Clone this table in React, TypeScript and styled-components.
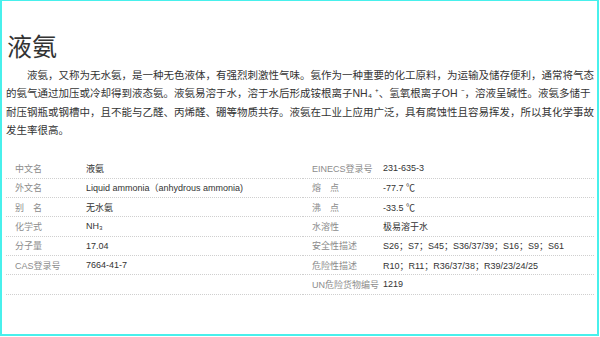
import React from "react";
import styled, { createGlobalStyle } from "styled-components";

const GlobalStyle = createGlobalStyle`
  html, body { margin: 0; padding: 0; background: #fff; }
  body { font-family: "Liberation Sans", "Noto Sans CJK SC", sans-serif; }
`;

const Frame = styled.div`
  box-sizing: border-box;
  width: 599px;
  height: 336px;
  border-style: solid;
  border-color: #48f0ec;
  border-width: 1px 2px 2px 2px;
  padding: 28px 0 0 4px;
  overflow: hidden;
`;

const Content = styled.div`
  width: 588px;
`;

const Title = styled.h1`
  margin: 0 0 4px 1px;
  font-family: "Noto Sans CJK SC", sans-serif;
  font-weight: 400;
  font-size: 25px;
  line-height: 33px;
  color: #333;
`;

const Para = styled.p`
  margin: 0;
  font-size: 10.5px;
  line-height: 18.33px;
  text-indent: 2em;
  color: #333;
`;

const Table = styled.div`
  display: grid;
  grid-template-columns: 297px 1fr;
  margin-top: 20px;
`;

const Column = styled.div`
  display: flex;
  flex-direction: column;
`;

const Row = styled.div`
  display: flex;
  align-items: center;
  height: 18.33px;
  border-bottom: 1px dotted #cfcfcf;
  padding-left: 9px;
  font-size: 9px;
  white-space: nowrap;
`;

const Label = styled.span`
  width: 71px;
  flex: none;
  color: #8c8c8c;
`;

const Value = styled.span`
  color: #333;
`;

type Item = { label: string; value: string };

const left: Item[] = [
  { label: "中文名", value: "液氨" },
  { label: "外文名", value: "Liquid ammonia（anhydrous ammonia)" },
  { label: "别\u3000名", value: "无水氨" },
  { label: "化学式", value: "NH₃" },
  { label: "分子量", value: "17.04" },
  { label: "CAS登录号", value: "7664-41-7" },
  { label: "", value: "" },
];

const right: Item[] = [
  { label: "EINECS登录号", value: "231-635-3" },
  { label: "熔\u3000点", value: "-77.7 ℃" },
  { label: "沸\u3000点", value: "-33.5 ℃" },
  { label: "水溶性", value: "极易溶于水" },
  { label: "安全性描述", value: "S26；S7；S45；S36/37/39；S16；S9；S61" },
  { label: "危险性描述", value: "R10；R11；R36/37/38；R39/23/24/25" },
  { label: "UN危险货物编号", value: "1219" },
];

const renderColumn = (items: Item[]) => (
  <Column>
    {items.map((it, i) => (
      <Row key={i}>
        <Label>{it.label}</Label>
        <Value>{it.value}</Value>
      </Row>
    ))}
  </Column>
);

const text =
  "液氨，又称为无水氨，是一种无色液体，有强烈刺激性气味。氨作为一种重要的化工原料，为运输及储存便利，通常将气态的氨气通过加压或冷却得到液态氨。液氨易溶于水，溶于水后形成铵根离子NH₄ ⁺、氢氧根离子OH ⁻，溶液呈碱性。液氨多储于耐压钢瓶或钢槽中，且不能与乙醛、丙烯醛、硼等物质共存。液氨在工业上应用广泛，具有腐蚀性且容易挥发，所以其化学事故发生率很高。";

export default function App() {
  return (
    <>
      <GlobalStyle />
      <Frame>
        <Content>
          <Title>液氨</Title>
          <Para>{text}</Para>
          <Table>
            {renderColumn(left)}
            {renderColumn(right)}
          </Table>
        </Content>
      </Frame>
    </>
  );
}
